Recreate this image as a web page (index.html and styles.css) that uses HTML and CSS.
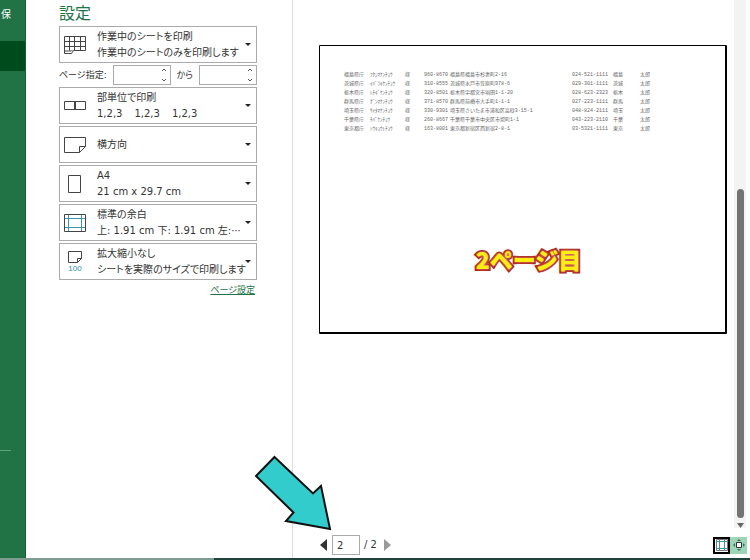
FILE: index.html
```
<!DOCTYPE html>
<html lang="ja">
<head>
    <meta charset="UTF-8">
    <meta name="viewport" content="width=device-width, initial-scale=1.0">
    <title>印刷</title>
    <link rel="stylesheet" href="styles.css">
</head>
<body>
    <div class="backstage">
        <nav class="sidebar">
            <a href="#" class="nav-item">保</a>
            <a href="#" class="nav-item active" aria-label="印刷"></a>
            <hr class="nav-line">
        </nav>

        <section class="settings">
            <h1>設定</h1>
            <button class="option" aria-haspopup="listbox">
                <svg class="icon" viewBox="0 0 22 22" width="22" height="22">
                    <path d="M.5 2.500h21v14h-12l-2 3h-7zM.5 7.500h21M.5 12.500h21M.5 17h7l1-1M5.500 2.500v14M10.500 2.500v14M16.500 2.500v14" />
                </svg>
                <span class="text"><span>作業中のシートを印刷</span><span>作業中のシートのみを印刷します</span></span>
                <span class="caret"></span>
            </button>

            <div class="range">
                <label for="from">ページ指定:</label>
                <span class="spin">
                    <input type="text" id="from">
                    <svg viewBox="0 0 6 14" width="6" height="14"><path d="M1 3l2-2 2 2M1 11l2 2 2-2" /></svg>
                </span>
                <label for="to">から</label>
                <span class="spin">
                    <input type="text" id="to">
                    <svg viewBox="0 0 6 14" width="6" height="14"><path d="M1 3l2-2 2 2M1 11l2 2 2-2" /></svg>
                </span>
            </div>

            <button class="option" aria-haspopup="listbox">
                <svg class="icon" viewBox="0 0 22 22" width="22" height="22">
                    <path d="M.5 6.500h21v8h-21zM10.500 6.500v8M11.500 6.500v8" />
                </svg>
                <span class="text"><span>部単位で印刷</span><span class="sets"><span>1,2,3</span><span>1,2,3</span><span>1,2,3</span></span></span>
                <span class="caret"></span>
            </button>
            <button class="option" aria-haspopup="listbox">
                <svg class="icon" viewBox="0 0 22 22" width="22" height="22">
                    <path d="M.5 3.500h21v9l-6 6h-15zM15.500 18.500v-6h6" />
                </svg>
                <span class="text"><span>横方向</span></span>
                <span class="caret"></span>
            </button>
            <button class="option" aria-haspopup="listbox">
                <svg class="icon" viewBox="0 0 22 22" width="22" height="22">
                    <path d="M4.500 2.500h12v17h-12z" />
                </svg>
                <span class="text"><span>A4</span><span>21 cm x 29.7 cm</span></span>
                <span class="caret"></span>
            </button>
            <button class="option" aria-haspopup="listbox">
                <svg class="icon" viewBox="0 0 22 22" width="22" height="22">
                    <path class="teal" d="M4.500 3v16M17.500 3v16M1 6.500h20M1 15.500h20" />
                    <path d="M.5 2.500h21v17h-21z" />
                </svg>
                <span class="text"><span>標準の余白</span><span>上: 1.91 cm 下: 1.91 cm 左:⋯</span></span>
                <span class="caret"></span>
            </button>
            <button class="option" aria-haspopup="listbox">
                <svg class="icon" viewBox="0 0 22 22" width="22" height="22">
                    <path d="M4.500.5h13v7l-4 4h-9zM13.500 11.500v-4h4" />
                    <text x="11" y="20">100</text>
                </svg>
                <span class="text"><span>拡大縮小なし</span><span>シートを実際のサイズで印刷します</span></span>
                <span class="caret"></span>
            </button>
            <a href="#" class="page-setup">ページ設定</a>
        </section>

        <main class="preview">
            <div class="paper">
                <table>
                    <tr><td>福島県庁</td><td>ﾌｸｼﾏｹﾝﾁｮｳ</td><td>様</td><td>960-8670</td><td>福島県福島市杉妻町2-16</td><td>024-521-1111</td><td>福島</td><td>太郎</td></tr>
                    <tr><td>茨城県庁</td><td>ｲﾊﾞﾗｷｹﾝﾁｮｳ</td><td>様</td><td>310-8555</td><td>茨城県水戸市笠原町978-6</td><td>029-301-1111</td><td>茨城</td><td>太郎</td></tr>
                    <tr><td>栃木県庁</td><td>ﾄﾁｷﾞｹﾝﾁｮｳ</td><td>様</td><td>320-8501</td><td>栃木県宇都宮市塙田1-1-20</td><td>028-623-2323</td><td>栃木</td><td>太郎</td></tr>
                    <tr><td>群馬県庁</td><td>ｸﾞﾝﾏｹﾝﾁｮｳ</td><td>様</td><td>371-8570</td><td>群馬県前橋市大手町1-1-1</td><td>027-223-1111</td><td>群馬</td><td>太郎</td></tr>
                    <tr><td>埼玉県庁</td><td>ｻｲﾀﾏｹﾝﾁｮｳ</td><td>様</td><td>330-9301</td><td>埼玉県さいたま市浦和区高砂3-15-1</td><td>048-824-2111</td><td>埼玉</td><td>太郎</td></tr>
                    <tr><td>千葉県庁</td><td>ﾁﾊﾞｹﾝﾁｮｳ</td><td>様</td><td>260-8667</td><td>千葉県千葉市中央区市場町1-1</td><td>043-223-2110</td><td>千葉</td><td>太郎</td></tr>
                    <tr><td>東京都庁</td><td>ﾄｳｷｮｳﾄﾁｮｳ</td><td>様</td><td>163-8001</td><td>東京都新宿区西新宿2-8-1</td><td>03-5321-1111</td><td>東京</td><td>太郎</td></tr>
                </table>
                <p class="caption">2ページ目</p>
            </div>

            <div class="toolbar">
                <button class="step" aria-label="前のページ"><svg viewBox="0 0 7 12" width="7" height="12"><path d="M7 0v12L0 6z" /></svg></button>
                <input type="text" class="page-number" value="2" aria-label="ページ">
                <span>/ 2</span>
                <button class="step next" aria-label="次のページ"><svg viewBox="0 0 7 12" width="7" height="12"><path d="M0 0v12l7-6z" /></svg></button>
                <div class="tools">
                    <button class="tool selected" aria-label="余白の表示">
                        <svg viewBox="0 0 12 12" width="12" height="12"><path d="M.5.5h11v11H.5z" /><path class="teal" d="M3.500 1v10M8.500 1v10M1 2.500h10M1 9.500h10" /></svg>
                    </button>
                    <button class="tool" aria-label="ページに合わせる">
                        <svg viewBox="0 0 12 12" width="12" height="12"><path class="page" d="M3.500 3.500h5v5h-5z" /><path class="solid" d="M6 0l2 2H4zM6 12l2-2H4zM0 6l2-2v4zM12 6l-2-2v4z" /></svg>
                    </button>
                </div>
            </div>
        </main>

        <div class="scrollbar">
            <div class="thumb"></div>
            <svg viewBox="0 0 7 5" width="7" height="5"><path d="M0 0h7L3.500 5z" /></svg>
        </div>

        <svg class="pointer" viewBox="0 0 78 76" width="78" height="76">
            <path d="M20.500 2L59 38.500L67 31L76 74L32 66L39.500 57.500L2 21z" />
        </svg>
    </div>
</body>
</html>
```
FILE: styles.css
```
* {
    box-sizing: border-box;
}

body {
    margin: 0;
    font-family: "DejaVu Sans", "Noto Sans CJK JP", sans-serif;
    font-size: 10px;
    line-height: 16px;
    color: #333;
    background-color: #fff;
}

button,
input {
    font: inherit;
    color: inherit;
}

.backstage {
    position: relative;
    display: flex;
    height: 100vh;
    border-bottom: 2px solid;
    border-image: linear-gradient(to right, #7f9c92 215px, #1f433a 215px) 2;
    padding-right: 4px;
    font-feature-settings: "palt";
}

/* left menu */
.sidebar {
    width: 26px;
    flex-shrink: 0;
    overflow: hidden;
    background-color: #217346;
    border-right: 1px solid #1a5c38;
}

.nav-item {
    display: flex;
    justify-content: flex-end;
    align-items: center;
    width: 11px;
    height: 30px;
    white-space: nowrap;
    color: #fff;
    text-decoration: none;
}

.nav-item.active {
    width: 100%;
    margin-top: 11px;
    background-color: #004b1c;
}

.nav-line {
    width: 11px;
    margin: 379px 0 0;
    border: 0;
    border-top: 1px solid #5fa37e;
}

/* print settings */
.settings {
    display: flex;
    flex-direction: column;
    gap: 2px;
    width: 267px;
    flex-shrink: 0;
    padding: 4px 35px 0 33px;
    border-right: 1px solid #ddd;
}

.settings h1 {
    margin: 0;
    font-size: 16px;
    font-weight: 400;
    line-height: 20px;
    color: #217346;
}

.option {
    display: flex;
    align-items: center;
    height: 37px;
    padding: 0 4px;
    border: 1px solid #ababab;
    background-color: #fff;
    text-align: left;
}

.icon {
    margin-right: 11px;
    flex-shrink: 0;
}

.icon path {
    fill: none;
    stroke: #444;
}

.icon .teal,
.tool .teal {
    stroke: #3b96a8;
}

.icon text {
    font-family: "Liberation Sans", sans-serif;
    font-size: 8px;
    text-anchor: middle;
    fill: #2b8fa3;
}

.text {
    display: flex;
    flex-direction: column;
    flex: 1;
    min-width: 0;
    white-space: nowrap;
}

.sets {
    display: flex;
    gap: 12px;
}

.caret {
    border: 3px solid transparent;
    border-top-color: #222;
    border-bottom: 0;
    margin-right: 1px;
}

.range {
    display: flex;
    justify-content: space-between;
    align-items: center;
    height: 20px;
    font-size: 9px;
}

.spin {
    display: flex;
    align-items: center;
    width: 58px;
    height: 20px;
    padding-right: 3px;
    border: 1px solid #ababab;
}

.spin input {
    flex: 1;
    min-width: 0;
    border: 0;
    padding: 0 3px;
    background: none;
}

.spin path {
    fill: none;
    stroke: #555;
}

.page-setup {
    align-self: flex-end;
    margin-right: 2px;
    font-size: 9px;
    color: #217346;
}

/* page preview */
.preview {
    display: flex;
    flex-direction: column;
    justify-content: space-between;
    flex: 1;
    min-width: 0;
    padding: 45px 3px 3px 26px;
}

.paper {
    margin-right: 4px;
    height: 289px;
    padding: 25px 0 0 24px;
    border: 1px solid #000;
    border-width: 1px 2px 2px 1px;
    border-radius: 1px;
}

.paper table {
    table-layout: fixed;
    width: 320px;
    border-collapse: collapse;
    font-family: "Liberation Mono", "Noto Sans CJK JP", monospace;
    font-feature-settings: normal;
    font-size: 5px;
    line-height: 9px;
    color: #666;
    white-space: nowrap;
}

.paper td {
    height: 9px;
    padding: 0;
}

.paper td:nth-child(1) { width: 26px; }
.paper td:nth-child(2) { width: 35px; }
.paper td:nth-child(3) { width: 19px; }
.paper td:nth-child(4) { width: 26px; }
.paper td:nth-child(5) { width: 122px; }
.paper td:nth-child(6) { width: 41px; }
.paper td:nth-child(7) { width: 27px; }

.caption {
    margin: 108px 12px 0 0;
    text-align: center;
    font-family: "Noto Sans CJK JP", sans-serif;
    font-feature-settings: normal;
    font-size: 23px;
    font-weight: 900;
    line-height: 34px;
    color: #ffee11;
    -webkit-text-stroke: 4px #a8201a;
    paint-order: stroke fill;
    text-shadow: 0 0 3px #f5a58c;
}

.toolbar {
    display: flex;
    align-items: center;
    gap: 4px;
}

.step {
    display: flex;
    padding: 0 1px;
    border: 0;
    background: none;
    fill: #333;
}

.step.next {
    margin-left: 2px;
    fill: #999;
}

.page-number {
    width: 28px;
    height: 20px;
    padding: 0 4px;
    border: 1px solid #ababab;
}

.tools {
    display: flex;
    margin-left: auto;
    margin-right: -16px;
    z-index: 1;
}

.tool {
    display: flex;
    justify-content: center;
    align-items: center;
    width: 17px;
    height: 17px;
    padding: 0;
    border: 0;
    background-color: #9fd5b7;
}

.tool.selected {
    border: 2px solid #000;
    background-color: #fff;
}

.tool path {
    fill: none;
    stroke: #777;
}

.tool .page {
    fill: #fff;
    stroke: #333;
}

.tool .solid {
    fill: #3f6f62;
    stroke: none;
}

.scrollbar {
    display: flex;
    flex-direction: column;
    align-items: center;
    gap: 5px;
    width: 12px;
    margin-bottom: 30px;
    padding-top: 189px;
    background-color: #f3f3f3;
    fill: #666;
}

.thumb {
    flex: 1;
    width: 7px;
    border-radius: 4px;
    background-color: #737373;
}

/* arrow drawn over the preview */
.pointer {
    position: absolute;
    left: 254px;
    top: 455px;
    fill: #33cccc;
    stroke: #111;
    stroke-width: 2px;
}
```
